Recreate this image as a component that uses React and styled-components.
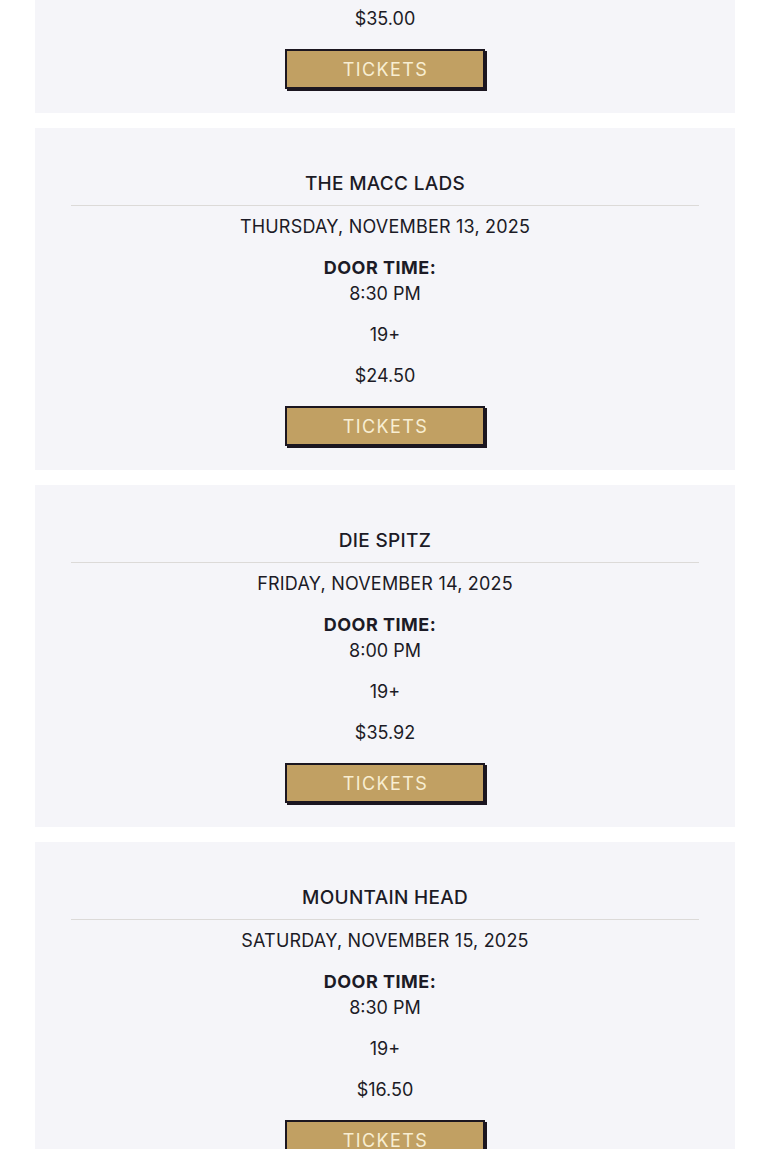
import React from "react";
import styled, { createGlobalStyle } from "styled-components";

const Global = createGlobalStyle`
  html, body { margin: 0; padding: 0; background: #ffffff; }
  body { font-family: "Inter", "Liberation Sans", sans-serif; color: #1c1b26; overflow: hidden; }
`;

const List = styled.div`
  display: flex;
  flex-direction: column;
  gap: 15px;
  padding: 0 35px;
  margin-top: -229px;
`;

const Card = styled.section`
  background: #f5f5f9;
  height: 342px;
  box-sizing: border-box;
  padding: 41px 36px 0;
  display: flex;
  flex-direction: column;
  align-items: center;
  text-align: center;
`;

const Title = styled.h2`
  margin: 0;
  width: 100%;
  font-size: 19px;
  font-weight: 500;
  line-height: 30px;
  letter-spacing: 0.3px;
  padding-bottom: 6px;
  border-bottom: 1px solid #dcdad8;
`;

const DateLine = styled.div`
  margin-top: 7px;
  font-size: 18px;
  line-height: 28px;
  font-weight: 400;
  letter-spacing: 0.2px;
`;

const Door = styled.div`
  margin-top: 14px;
  display: flex;
  flex-direction: column;
  align-items: center;
`;

const Label = styled.span`
  font-size: 18px;
  line-height: 26px;
  font-weight: 700;
  letter-spacing: 0.5px;
  padding-right: 10px;
`;

const Text = styled.div`
  font-size: 18px;
  line-height: 26px;
  margin-top: ${(p) => p.$gap || 0}px;
`;

const Button = styled.a`
  margin-top: 17px;
  width: 200px;
  height: 40px;
  box-sizing: border-box;
  background: #c1a063;
  border: 2px solid #1b1620;
  box-shadow: 2px 2px 0 #1b1620;
  color: #f8eed2;
  font-size: 18px;
  font-weight: 400;
  letter-spacing: 1.4px;
  padding-left: 1px;
  display: flex;
  align-items: center;
  justify-content: center;
  text-decoration: none;
  cursor: pointer;
`;

const shows = [
  { title: "THE GUESS WHO", date: "WEDNESDAY, NOVEMBER 12, 2025", time: "8:00 PM", price: "$35.00" },
  { title: "THE MACC LADS", date: "THURSDAY, NOVEMBER 13, 2025", time: "8:30 PM", price: "$24.50" },
  { title: "DIE SPITZ", date: "FRIDAY, NOVEMBER 14, 2025", time: "8:00 PM", price: "$35.92" },
  { title: "MOUNTAIN HEAD", date: "SATURDAY, NOVEMBER 15, 2025", time: "8:30 PM", price: "$16.50" },
];

export default function App() {
  return (
    <>
      <Global />
      <List>
        {shows.map((s) => (
          <Card key={s.title}>
            <Title>{s.title}</Title>
            <DateLine>{s.date}</DateLine>
            <Door>
              <Label>DOOR TIME:</Label>
              <Text>{s.time}</Text>
            </Door>
            <Text $gap={15}>19+</Text>
            <Text $gap={15}>{s.price}</Text>
            <Button>TICKETS</Button>
          </Card>
        ))}
      </List>
    </>
  );
}
